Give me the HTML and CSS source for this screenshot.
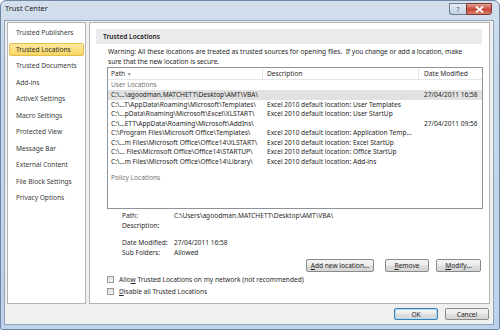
FILE: index.html
```html
<!DOCTYPE html>
<html lang="en">
<head>
    <meta charset="UTF-8">
    <title>Trust Center</title>
    <link rel="stylesheet" href="styles.css">
</head>
<body>
    <div class="window">
        <div class="titlebar">
            <span class="title">Trust Center</span>
            <div class="caption-btns">
                <span class="cap cap-help">?</span>
                <span class="cap cap-close">
                    <svg width="9" height="7" viewBox="0 0 9 7"><path d="M1 0.5 L8 6.5 M8 0.5 L1 6.5" stroke="#fff" stroke-width="1.8"/></svg>
                </span>
            </div>
        </div>

        <div class="client">
            <div class="body-row">
                <ul class="sidebar">
                    <li class="side-item">Trusted Publishers</li>
                    <li class="side-item active">Trusted Locations</li>
                    <li class="side-item">Trusted Documents</li>
                    <li class="side-item">Add-ins</li>
                    <li class="side-item">ActiveX Settings</li>
                    <li class="side-item">Macro Settings</li>
                    <li class="side-item">Protected View</li>
                    <li class="side-item">Message Bar</li>
                    <li class="side-item">External Content</li>
                    <li class="side-item">File Block Settings</li>
                    <li class="side-item">Privacy Options</li>
                </ul>

                <div class="panel">
                    <div class="section-head">Trusted Locations</div>
                    <p class="warning">Warning: All these locations are treated as trusted sources for opening files.&nbsp; If you change or add a location, make sure that the new location is secure.</p>

                    <div class="listbox">
                        <div class="list-head">
                            <span class="col col-path">Path <span class="sort-arrow">&#9662;</span></span>
                            <span class="col col-desc">Description</span>
                            <span class="col col-date">Date Modified</span>
                        </div>
                        <div class="group">User Locations</div>
                        <div class="row selected">
                            <span class="col col-path">C:\...\agoodman.MATCHETT\Desktop\AMT\VBA\</span>
                            <span class="col col-desc"></span>
                            <span class="col col-date">27/04/2011 16:58</span>
                        </div>
                        <div class="row">
                            <span class="col col-path">C:\...T\AppData\Roaming\Microsoft\Templates\</span>
                            <span class="col col-desc">Excel 2010 default location: User Templates</span>
                            <span class="col col-date"></span>
                        </div>
                        <div class="row">
                            <span class="col col-path">C:\...pData\Roaming\Microsoft\Excel\XLSTART\</span>
                            <span class="col col-desc">Excel 2010 default location: User StartUp</span>
                            <span class="col col-date"></span>
                        </div>
                        <div class="row">
                            <span class="col col-path">C:\...ETT\AppData\Roaming\Microsoft\AddIns\</span>
                            <span class="col col-desc"></span>
                            <span class="col col-date">27/04/2011 09:56</span>
                        </div>
                        <div class="row">
                            <span class="col col-path">C:\Program Files\Microsoft Office\Templates\</span>
                            <span class="col col-desc">Excel 2010 default location: Application Temp...</span>
                            <span class="col col-date"></span>
                        </div>
                        <div class="row">
                            <span class="col col-path">C:\...m Files\Microsoft Office\Office14\XLSTART\</span>
                            <span class="col col-desc">Excel 2010 default location: Excel StartUp</span>
                            <span class="col col-date"></span>
                        </div>
                        <div class="row">
                            <span class="col col-path">C:\... Files\Microsoft Office\Office14\STARTUP\</span>
                            <span class="col col-desc">Excel 2010 default location: Office StartUp</span>
                            <span class="col col-date"></span>
                        </div>
                        <div class="row">
                            <span class="col col-path">C:\...m Files\Microsoft Office\Office14\Library\</span>
                            <span class="col col-desc">Excel 2010 default location: Add-ins</span>
                            <span class="col col-date"></span>
                        </div>
                        <div class="group group-policy">Policy Locations</div>
                    </div>

                    <div class="details">
                        <div class="detail"><span class="label">Path:</span><span>C:\Users\agoodman.MATCHETT\Desktop\AMT\VBA\</span></div>
                        <div class="detail"><span class="label">Description:</span><span></span></div>
                        <div class="detail detail-gap"><span class="label">Date Modified:</span><span>27/04/2011 16:58</span></div>
                        <div class="detail"><span class="label">Sub Folders:</span><span>Allowed</span></div>
                    </div>

                    <div class="actions">
                        <button class="btn btn-add"><u>A</u>dd new location...</button>
                        <button class="btn btn-remove"><u>R</u>emove</button>
                        <button class="btn btn-modify"><u>M</u>odify...</button>
                    </div>

                    <label class="check"><span class="box"></span><span>Allo<u>w</u> Trusted Locations on my network (not recommended)</span></label>
                    <label class="check"><span class="box"></span><span><u>D</u>isable all Trusted Locations</span></label>
                </div>
            </div>

            <div class="footer">
                <button class="btn btn-ok">OK</button>
                <button class="btn btn-cancel">Cancel</button>
            </div>
        </div>
    </div>
</body>
</html>
```

FILE: styles.css
```css
/* Base */
* {
    margin: 0;
    padding: 0;
    box-sizing: border-box;
}

body {
    font-family: 'Noto Sans', 'DejaVu Sans', sans-serif;
    font-size: 6.6px;
    color: #2a2a2a;
    background-color: #fff;
    width: 500px;
    height: 330px;
    overflow: hidden;
}

/* Window frame */
.window {
    width: 500px;
    height: 330px;
    border: 1px solid #6f87a6;
    border-radius: 6px 6px 2px 2px;
    background: linear-gradient(to bottom, #d3dfec 0%, #c6d7ea 20%, #bcd2ea 100%);
}

.titlebar {
    height: 19px;
    display: flex;
    justify-content: space-between;
    padding-left: 4px;
}

.title {
    font-size: 7.4px;
    color: #1c1c1c;
    line-height: 15px;
}

.caption-btns {
    display: flex;
    margin-right: 7px;
    margin-top: 2px;
    height: 12px;
}

.cap {
    display: flex;
    align-items: center;
    justify-content: center;
    border: 1px solid #6b7d93;
    height: 12px;
}

.cap-help {
    width: 17px;
    border-radius: 0 0 0 3px;
    border-right: none;
    background: linear-gradient(to bottom, #e3ebf4, #c3d2e3);
    color: #56677d;
    font-size: 7px;
}

.cap-close {
    width: 26px;
    border-radius: 0 0 3px 0;
    background: linear-gradient(to bottom, #e3a295, #c8493a 55%, #d9806a);
    border-color: #7a3a36;
}

.client {
    margin-left: 3px;
    width: 490px;
    height: 305px;
    border: 1px solid #8ea2ba;
    background-color: #f0f0f0;
    display: flex;
    flex-direction: column;
}

.body-row {
    display: flex;
    gap: 3px;
    padding: 1px 3px 0 2px;
    height: 283px;
}

/* Sidebar */
.sidebar {
    list-style: none;
    width: 79px;
    background-color: #fff;
    border: 1px solid #b4b4b4;
    padding: 3px 1px 0 1px;
}

.side-item {
    height: 13.5px;
    line-height: 13.5px;
    margin-bottom: 3px;
    padding-left: 7px;
    color: #3a3a3a;
    white-space: nowrap;
}

.side-item.active {
    background: linear-gradient(to bottom, #fdeaa0, #f8d661);
    border: 1px solid #e2bf4f;
    border-radius: 2px;
    line-height: 11.5px;
    padding-left: 6px;
    color: #2b2b2b;
}

/* Main panel */
.panel {
    flex: 1;
    background-color: #fff;
    border: 1px solid #b4b4b4;
    padding: 6px 8px 0 6px;
    display: flex;
    flex-direction: column;
}

.section-head {
    height: 15px;
    line-height: 15px;
    background-color: #ebebeb;
    padding-left: 7px;
    font-weight: 600;
    color: #222;
    margin-right: -1px;
}

.warning {
    margin: 3px 12px 0 12px;
    line-height: 10px;
    color: #262626;
    height: 20px;
}

.listbox {
    margin: 0 -2px 0 11px;
    height: 142px;
    border: 1px solid #8e939b;
    display: flex;
    flex-direction: column;
}

.list-head {
    display: flex;
    height: 12px;
    line-height: 11px;
    border-bottom: 1px solid #e3e6ea;
}

.list-head .col {
    border-right: 1px solid #e3e6ea;
}

.list-head .col-date {
    border-right: none;
}

.sort-arrow {
    color: #8a8a8a;
    font-size: 5.5px;
    margin-left: 1px;
}

.col {
    white-space: nowrap;
    overflow: hidden;
}

.col-path {
    width: 155px;
    padding-left: 3px;
}

.col-desc {
    width: 156px;
    padding-left: 4px;
}

.col-date {
    flex: 1;
    padding-left: 5px;
}

.group {
    height: 10px;
    line-height: 10px;
    padding-left: 3px;
    color: #727272;
}

.group-policy {
    margin-top: 7px;
}

.row {
    display: flex;
    height: 9.5px;
    line-height: 9.5px;
    color: #1e1e1e;
}

.row.selected {
    background-color: #e1e1e1;
}

/* Details */
.details {
    margin: 2px 0 0 26px;
}

.detail {
    display: flex;
    height: 10px;
    line-height: 10px;
}

.detail-gap {
    margin-top: 7px;
}

.label {
    width: 52px;
}

/* Buttons */
.actions {
    display: flex;
    justify-content: flex-end;
    margin-top: 1px;
}

.btn {
    font-family: inherit;
    font-size: 6.6px;
    color: #1e1e1e;
    height: 13px;
    border: 1px solid #8a8a8a;
    border-radius: 2px;
    background: linear-gradient(to bottom, #f4f4f4 0%, #ececec 48%, #dedede 52%, #d6d6d6 100%);
}

.btn-add {
    width: 68px;
}

.btn-remove {
    width: 44px;
    margin-left: 11px;
}

.btn-modify {
    width: 45px;
    margin-left: 7px;
}

.check {
    display: flex;
    align-items: center;
    height: 12px;
    margin-left: 11px;
}

.check:first-of-type {
    margin-top: 1px;
}

.box {
    width: 7px;
    height: 7px;
    border: 1px solid #9a9a9a;
    background: linear-gradient(to bottom right, #dcdcdc, #f8f8f8);
    margin-right: 5px;
}

/* Footer */
.footer {
    display: flex;
    justify-content: flex-end;
    gap: 7px;
    padding: 4px 4px 0 0;
}

.btn-ok,
.btn-cancel {
    width: 44px;
    height: 12px;
}

.btn-ok {
    border-color: #3c7fb1;
    box-shadow: inset 0 0 0 1px #a9dcf6;
}
```
